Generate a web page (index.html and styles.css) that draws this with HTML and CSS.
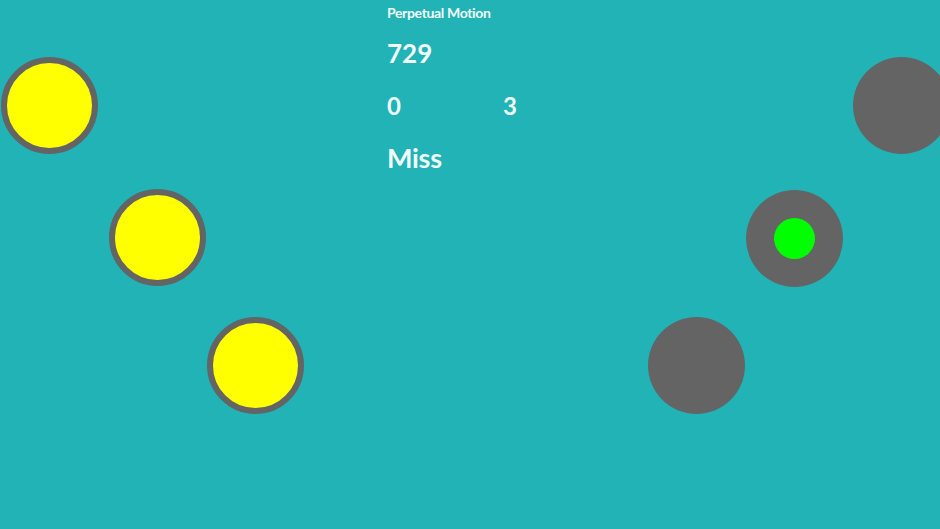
FILE: index.html
```html
<!DOCTYPE html>
<html>
<head>
<meta charset="utf-8">
<link rel="stylesheet" href="styles.css">
</head>
<body>
<div class="stage">
  <div class="hud">
    <div class="title">Perpetual Motion</div>
    <div class="score">729</div>
    <div class="counts"><span class="c">0</span><span class="c">3</span></div>
    <div class="status">Miss</div>
  </div>
  <div class="ball yellow b1"></div>
  <div class="ball yellow b2"></div>
  <div class="ball yellow b3"></div>
  <div class="ball gray g1"></div>
  <div class="ball gray g2"><div class="dot"></div></div>
  <div class="ball gray g3"></div>
</div>
</body>
</html>
```
FILE: styles.css
```css
html, body { margin: 0; padding: 0; }
body { background: #21b3b5; font-family: "Lato", "Open Sans", sans-serif; color: #f2fbfb; overflow: hidden; }
.stage { position: relative; width: 940px; height: 529px; overflow: hidden; }
.hud { display: flex; flex-direction: column; padding-left: 387px; padding-top: 3px; }
.title { font-size: 14px; font-weight: 700; letter-spacing: -0.35px; line-height: 19px; }
.score { font-size: 26px; font-weight: 700; line-height: 34px; margin-top: 14px; }
.counts { display: flex; font-size: 24px; font-weight: 700; line-height: 34px; margin-top: 19px; }
.counts .c:first-child { width: 116px; }
.status { font-size: 27px; font-weight: 700; letter-spacing: -0.3px; line-height: 36px; margin-top: 17px; }
.ball { position: absolute; width: 97px; height: 97px; border-radius: 50%; box-sizing: border-box; display: flex; align-items: center; justify-content: center; }
.yellow { background: #ffff00; border: 6px solid #646464; }
.gray { background: #646464; }
.b1 { left: 1px; top: 57px; }
.b2 { left: 109px; top: 189px; }
.b3 { left: 207px; top: 317px; }
.g1 { left: 853px; top: 57px; }
.g2 { left: 746px; top: 190px; }
.g3 { left: 648px; top: 317px; }
.dot { width: 41px; height: 41px; border-radius: 50%; background: #00ff00; }
```
